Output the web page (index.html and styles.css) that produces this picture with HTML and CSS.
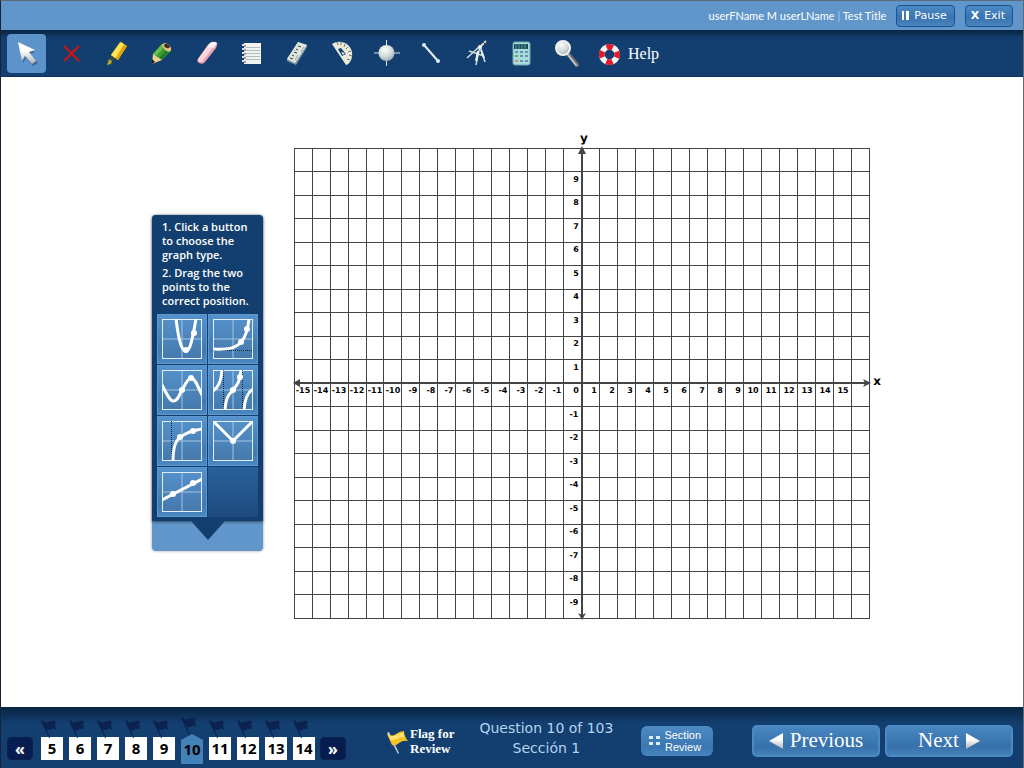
FILE: index.html
```html
<!DOCTYPE html>
<html lang="en">
<head>
<meta charset="utf-8">
<title>Test Title</title>
<link rel="stylesheet" href="styles.css">
</head>
<body>
<div class="app">
  <header class="topbar">
    <span class="user">userFName M userLName <i class="divider">|</i> Test Title</span>
    <button class="small-btn" type="button"><svg width="8" height="9" viewBox="0 0 8 9"><path d="M0 0h2v9H0zM4 0h3v9H4z" fill="#fff"/></svg>Pause</button>
    <button class="small-btn" type="button"><b>X</b>Exit</button>
  </header>

  <nav class="toolbar" aria-label="Tools">
    <button class="tool active" type="button" aria-label="Pointer"><svg viewBox="0 0 32 32"><path d="M8 7l16 8-5 2 8 9-5 3-7-8-3 5z" fill="#2f4f76" opacity=".6"/><path d="M7 5l17 8-6 2 7 9-4 3-7-8-3 5z" fill="url(#silver)"/></svg></button>
    <button class="tool" type="button" aria-label="Delete"><svg viewBox="0 0 32 32"><path d="M8 9l15 15M23 9L8 24" stroke="#c81414" stroke-width="2.400" fill="none"/></svg></button>
    <button class="tool" type="button" aria-label="Highlighter"><svg viewBox="0 0 32 32"><path d="M19 5l7 4-9 14-7-5z" fill="#f6c514"/><path d="M20 5l3 2-9 14-4-3z" fill="#ffe25c"/><path d="M23 7l3 2-9 14-2-1z" fill="#e0a70c"/><path d="M10 19l5 3-4 2-2-2z" fill="#3b4a3f"/><path d="M8 22l3 2-1 3-4 1z" fill="#b7a52a"/></svg></button>
    <button class="tool" type="button" aria-label="Pencil"><svg viewBox="0 0 32 32"><path d="M16 7l9 7-9 9-9-6z" fill="#3a9b34"/><path d="M16 7l3 2-9 10-3-2z" fill="#66bd50"/><path d="M23 10l2 3-9 10-3-2z" fill="#257d29"/><path d="M7 17l9 6-10 4z" fill="#ecd38d"/><path d="M6 22l3 3-3 2z" fill="#15191d"/><path d="M16 8c2-4 10 0 9 5-2 4-7 0-9-5z" fill="#e8c082"/><ellipse cx="21" cy="9" rx="3" ry="2" fill="#422c25" transform="rotate(25 21 9)"/></svg></button>
    <button class="tool" type="button" aria-label="Eraser"><svg viewBox="0 0 32 32"><path d="M17 8q4-5 9-2 1 2-1 5L14 25q-2 3-6 1-3-2-1-4z" fill="#eda1ae"/><path d="M17 8q4-5 9-2l-3 3L11 25q-4 0-4-3z" fill="#ffd7dc"/><path d="M18 7q4-4 8-1l-3 5-6-1z" fill="#fff" opacity=".7"/></svg></button>
    <button class="tool" type="button" aria-label="Notepad"><svg viewBox="0 0 32 32"><path d="M8 6h17v21H8z" fill="#f1f3f2"/><path d="M10 10.500h14M10 13.500h14M10 16.500h14M10 19.500h14M10 22.500h14" stroke="#b2bcbc"/><path d="M6 8h4M6 12h4M6 16h4M6 20h4M6 24h4" stroke="#dfe4e6" stroke-width="2"/><path d="M8 9h2M8 13h2M8 17h2M8 21h2M8 25h2" stroke="#9a3347"/></svg></button>
    <button class="tool" type="button" aria-label="Ruler"><svg viewBox="0 0 32 32"><path d="M17 5l9 3v2L15 28l-9-4v-2z" fill="#8497a0"/><path d="M17 5l9 3-12 18-8-4z" fill="#dfe4dd"/><path d="M17 9l3 1M15 12l2 1M13 15l3 1M11 18l2 1M9 21l3 1" stroke="#39434a"/><path d="M23 10l-3 5M17 18l-3 5" stroke="#9aa5a4"/></svg></button>
    <button class="tool" type="button" aria-label="Protractor"><svg viewBox="0 0 32 32"><path d="M6 7C14 2 24 6 26 15 27 21 24 27 20 28z" fill="#ebebdc"/><path d="M12 12l3-1 5 6-4 2z" fill="#123f70"/><path d="M15 15l4 1-2 2z" fill="#f1efd8"/><path d="M11 5l1 3M15 5l0 3M19 7l-1 3M22 10l-2 2M25 14l-3 1M26 19l-3-1M24 23l-3-1" stroke="#6b7775"/></svg></button>
    <button class="tool" type="button" aria-label="Point"><svg viewBox="0 0 32 32"><path d="M15.500 3v26M3 16h26" stroke="#d8e2e8"/><circle cx="15.500" cy="16" r="8" fill="url(#orb)"/></svg></button>
    <button class="tool" type="button" aria-label="Line segment"><svg viewBox="0 0 32 32"><path d="M8 8l14 16" stroke="#dfeaf0" stroke-width="2"/><circle cx="8" cy="8" r="2" fill="#d9f0fa"/><circle cx="22" cy="24" r="2" fill="#d9f0fa"/></svg></button>
    <button class="tool" type="button" aria-label="Compass"><svg viewBox="0 0 32 32"><path d="M19 9L6 21M19 9l-4 19M19 9l5 16M8 14l15 5" stroke="#d2dce0" stroke-width="1.500" fill="none"/><path d="M17 14l-2 10M20 13l3 8" stroke="#eef2f2" stroke-width="2"/><path d="M19 10l6-6" stroke="#e3dfc4" stroke-width="2"/><circle cx="19" cy="10" r="2" fill="#f4f6f6"/><path d="M24 8l2-4M22 5l2 2" stroke="#4b5153"/></svg></button>
    <button class="tool" type="button" aria-label="Calculator"><svg viewBox="0 0 32 32"><rect x="7" y="5" width="17" height="23" rx="2" fill="#a9dcdd" stroke="#6da9b0"/><path d="M8 7h14v5H8z" fill="#194c57"/><path d="M10 7v5M13 7v5M16 7v5M19 7v5" stroke="#5f9ca0"/><path d="M9 15h3M14 15h3M19 15h3M14 19h3M19 19h3M14 24h3M19 24h3" stroke="#6994ad" stroke-width="2"/><path d="M9 19h3" stroke="#6cae5f" stroke-width="2"/><path d="M9 24h3" stroke="#df8c72" stroke-width="2"/></svg></button>
    <button class="tool" type="button" aria-label="Magnifier"><svg viewBox="0 0 32 32"><path d="M18 18l8 10" stroke="#6f7375" stroke-width="4" stroke-linecap="round"/><path d="M17 18l8 10" stroke="#c3c4c2" stroke-width="2" stroke-linecap="round"/><circle cx="12" cy="11" r="7" fill="url(#orb)" stroke="#f2f3ee" stroke-width="2"/></svg></button>
    <button class="help" type="button"><svg viewBox="0 0 24 24"><circle cx="12" cy="12" r="8" fill="none" stroke="#f6f6f6" stroke-width="6"/><circle cx="12" cy="12" r="8" fill="none" stroke="#de1c2c" stroke-width="6" stroke-dasharray="6.6 5.966" stroke-dashoffset="3.3"/></svg>Help</button>
  </nav>

  <main class="stage">
    <section class="panel" aria-label="Graph type">
      <div class="panel-body">
        <p>1. Click a button<br>to choose the<br>graph type.</p>
        <p>2. Drag the two<br>points to the<br>correct position.</p>
        <div class="tiles">
          <button class="tile" type="button" aria-label="Quadratic"><svg viewBox="0 0 40 40"><use href="#frame"/><path class="curve" d="M14 0C17 24 20 32 24 32S30 22 34 0"/><circle cx="24" cy="31" r="3"/><circle cx="32" cy="14" r="3"/></svg></button>
          <button class="tile" type="button" aria-label="Exponential"><svg viewBox="0 0 40 40"><use href="#frame"/><path class="dots" d="M0 31.500H40"/><path class="curve" d="M0 30C16 31 23 29 28 23Q34 17 36 0"/><circle cx="28" cy="23" r="3"/><circle cx="34" cy="10" r="3"/></svg></button>
          <button class="tile" type="button" aria-label="Sine"><svg viewBox="0 0 40 40"><use href="#frame"/><path class="curve" d="M0 15C5 25 8 31 11 31 16 31 17 25 20 20S26 8 29 8 34 12 40 25"/><circle cx="20" cy="20" r="3"/><circle cx="29" cy="8" r="3"/></svg></button>
          <button class="tile" type="button" aria-label="Tangent"><svg viewBox="0 0 40 40"><use href="#frame"/><path class="dots" d="M10.500 0V40M29.500 0V40"/><path class="curve" d="M0 21Q8 16 9 0M12 40C13 25 17 24 20 20S27 13 28 0M31 40Q32 24 40 19"/><circle cx="20" cy="20" r="3"/><circle cx="27" cy="7" r="3"/></svg></button>
          <button class="tile" type="button" aria-label="Logarithmic"><svg viewBox="0 0 40 40"><use href="#frame"/><path class="dots" d="M9.500 0V40"/><path class="curve" d="M11 40C11 24 15 18 19 16Q26 10 40 8"/><circle cx="18" cy="16" r="3"/><circle cx="31" cy="10" r="3"/></svg></button>
          <button class="tile" type="button" aria-label="Absolute value"><svg viewBox="0 0 40 40"><use href="#frame"/><path class="curve" d="M0 0L20 20 40 0"/><circle cx="20" cy="20" r="3"/></svg></button>
          <button class="tile" type="button" aria-label="Linear"><svg viewBox="0 0 40 40"><use href="#frame"/><path class="curve" d="M0 28L40 7"/><circle cx="11" cy="22" r="3"/><circle cx="31" cy="11" r="3"/></svg></button>
          <div class="tile-empty"></div>
        </div>
      </div>
      <div class="panel-foot"><svg width="34" height="19" viewBox="0 0 34 19"><path d="M0 0h34L17 19z" fill="#133f70"/></svg></div>
    </section>
    <svg class="chart" viewBox="0 0 604 506" role="img" aria-label="Coordinate plane">
      <g id="grid"></g>
      <path class="axis" d="M12 253H583M298 21V486"/>
      <path class="tip" d="M9 253l7-4v3h2v2h-2v3zM587 253l-8-4 2 4-2 4zM298 16l4 8h-8zM298 490l4-7-4 2-4-2z"/>
      <g id="labels"></g>
      <text class="axis-name" x="300" y="12">y</text>
      <text class="axis-name" x="593" y="255">x</text>
    </svg>
  </main>

  <footer class="bottom">
    <nav class="pager" id="pager" aria-label="Questions"></nav>
    <button class="flag-review" type="button"><svg width="24" height="26" viewBox="0 0 24 26"><path d="M1 5l2-1 10 21-1 1z" fill="#c4ccd2"/><path d="M1 6q5 3 9 0 4-3 8-3 0 5 4 10-5-1-9 2-3 3-7 2z" fill="#f5c324"/><path d="M2 7q5 2 9 0 4-2 7-2l0 4q-5 0-8 2-3 2-5 1z" fill="#ffe271"/></svg><span>Flag for<br>Review</span></button>
    <p class="status">Question 10 of 103<br>Sección 1</p>
    <button class="section-review" type="button"><svg width="12" height="9" viewBox="0 0 12 9"><path d="M0 0h4v3H0zM7 0h4v3H7zM0 6h4v3H0zM7 6h4v3H7z" fill="#dcecf8"/></svg><span>Section<br>Review</span></button>
    <div class="step-group">
      <button class="step" type="button"><svg width="14" height="16" viewBox="0 0 14 16"><path d="M0 8L14 0v16z" fill="url(#silver)"/></svg>Previous</button>
      <button class="step" type="button">Next<svg width="14" height="16" viewBox="0 0 14 16"><path d="M14 8L0 0v16z" fill="url(#silver)"/></svg></button>
    </div>
  </footer>
</div>

<svg class="defs" width="0" height="0" aria-hidden="true">
  <defs>
    <linearGradient id="silver" x1="0" y1="0" x2="0" y2="1"><stop offset=".4" stop-color="#fff"/><stop offset="1" stop-color="#b0b0b6"/></linearGradient>
    <radialGradient id="orb" cx=".4" cy=".3" r=".7"><stop offset="0" stop-color="#fbfcfa"/><stop offset=".6" stop-color="#d2dbd9"/><stop offset="1" stop-color="#9fadb0"/></radialGradient>
    <g id="frame"><path d="M20 0V40M0 20H40" fill="none" stroke="#a5c4e1"/><rect x="0" y="0" width="40" height="40" fill="none" stroke="#e3eef8" stroke-width="2"/></g>
    <path id="flag" d="M0 1l2-1 1 2q4 1 6-1h6l-1 4 1 4q-4-1-6 1l-3 0 3 8H8z"/>
  </defs>
</svg>
<script src="app.js"></script>
</body>
</html>
```
FILE: app.js
```js
const NS = "http://www.w3.org/2000/svg";

function add(parent, name, attrs, text) {
  const el = document.createElementNS(NS, name);
  for (const key in attrs) el.setAttribute(key, attrs[key]);
  if (text !== undefined) el.textContent = text;
  parent.appendChild(el);
}

// Plane geometry: 32 columns by 20 rows.
const left = 10, top0 = 18, width = 575, height = 470;
const colX = i => Math.floor(left + 0.13 + i * width / 32) + 0.5;
const rowY = i => Math.floor(top0 + i * height / 20) + 0.5;

let d = "";
for (let i = 0; i <= 32; i++) d += `M${colX(i)} ${top0}V${top0 + height + 1}`;
for (let i = 0; i <= 20; i++) d += `M${left} ${rowY(i)}H${left + width + 1}`;
add(document.getElementById("grid"), "path", { d });

const labels = document.getElementById("labels");
for (let n = -15; n <= 15; n++) {
  // Two-digit labels sit a little left of the one-digit ones.
  const shift = Math.abs(n) > 9 ? -3 : n < 0 ? -1 : 0;
  add(labels, "text", { x: 292 + n * 18 + shift, y: 263 }, n);
}
for (let n = -9; n <= 9; n++) {
  if (n !== 0) {
    add(labels, "text", { x: n < 0 ? 290 : 292, y: Math.round(263 - n * 23.5) }, n);
  }
}

// Question pager.
const pager = document.getElementById("pager");
let html = '<button class="jump" type="button" aria-label="Earlier questions">«</button><ol>';
for (let q = 5; q <= 14; q++) {
  html += `<li${q === 10 ? ' class="current"' : ""}><svg width="16" height="18" viewBox="0 0 16 18"><use href="#flag"/></svg><a href="#q${q}">${q}</a></li>`;
}
html += '</ol><button class="jump" type="button" aria-label="Later questions">»</button>';
pager.innerHTML = html;
```
FILE: styles.css
```css
* { box-sizing: border-box; }
body { margin: 0; background: #fff; font-family: "DejaVu Sans", sans-serif; }
p, ol { margin: 0; padding: 0; }
button { font: inherit; color: inherit; border: 0; background: none; padding: 0; cursor: pointer; }
svg { display: block; flex: none; }
.defs { position: absolute; }

.app { min-height: 100vh; display: flex; flex-direction: column; border: solid #5c6b78; border-width: 1px 1px 0; border-left-color: #14243a; }

.topbar { height: 29px; display: flex; align-items: center; justify-content: flex-end; gap: 10px; padding-right: 10px; background: #6096c9; color: #fff; }
.user { font: 11px Lato, sans-serif; }
.divider { font-style: normal; opacity: .5; }
.small-btn { height: 22px; display: flex; align-items: center; gap: 4px; padding: 0 7px 0 5px; border: 1px solid #195292; border-radius: 4px; background: linear-gradient(#4b8ac6, #3974b0 60%, #4985bf); font-size: 11px; color: #fff; }
.small-btn b { margin-right: 1px; }

.toolbar { height: 47px; display: flex; align-items: center; gap: 6px; padding: 0 6px; background: linear-gradient(#08233f, #133f70 8px); color: #fff; border-bottom: 1px solid #0c3260; }
.tool { width: 39px; height: 39px; display: grid; place-items: center; border-radius: 4px; }
.tool svg { width: 32px; height: 32px; }
.active { background: #5b93ca; }
.help { display: flex; align-items: center; gap: 7px; margin: 2px 0 0 6px; font: 16px "Liberation Serif", serif; }
.help svg { width: 23px; height: 23px; }

.stage { flex: 1; display: flex; align-items: center; justify-content: center; gap: 21px; padding: 0 0 18px 16px; }

.panel { width: 111px; border-radius: 4px; box-shadow: 0 0 3px rgba(0, 0, 0, .4); background: #6096c9; }
.panel-body { padding: 5px 5px 4px; border-radius: 4px 4px 0 0; background: #133f70; color: #fff; box-shadow: 0 1px 3px rgba(0, 0, 0, .5); }
.panel-body p { padding-left: 5px; margin-bottom: 4px; font: 600 11px/14px "Open Sans", sans-serif; white-space: nowrap; }
.tiles { display: grid; grid-template-columns: 1fr 1fr; grid-auto-rows: 50px; gap: 1px; margin-top: 6px; }
.tile { display: grid; place-items: center; border: 1px solid #5e98cf; background: linear-gradient(#5592cb, #3f7ab3 75%, #4a88c2); }
.tile svg { width: 40px; height: 40px; background: linear-gradient(#5490c9, #4579ad); }
.tile circle { fill: #fff; }
.curve { fill: none; stroke: #fff; stroke-width: 3px; }
.dots { fill: none; stroke: #10263e; stroke-dasharray: 1 1; }
.tile-empty { background: linear-gradient(#2a6199, #1d4b7f); }
.panel-foot { height: 30px; display: flex; justify-content: center; }

.chart { width: 604px; height: 506px; overflow: visible; }
#grid path { stroke: #444; shape-rendering: crispEdges; }
.axis { stroke: #444; stroke-width: 2px; }
.tip { fill: #444; }
#labels text { font: bold 8px "DejaVu Sans", sans-serif; text-anchor: middle; text-rendering: geometricPrecision; }
.axis-name { font: bold 12px "DejaVu Sans", sans-serif; text-anchor: middle; text-rendering: geometricPrecision; }

.bottom { height: 61px; display: flex; align-items: center; padding: 6px 10px 0 6px; background: linear-gradient(#08233f, #133f70 16px); color: #fff; }
.pager { display: flex; align-items: center; align-self: flex-end; padding-bottom: 8px; }
.pager ol { display: flex; gap: 6px; height: 23px; margin: 0 5px 0 8px; list-style: none; }
.pager li { position: relative; width: 22px; }
.pager li svg { position: absolute; left: 0; top: -17px; fill: #0c2350; }
.pager a { display: block; height: 23px; background: #fff; color: #000; font: bold 15px/23px "Noto Sans", sans-serif; text-align: center; text-decoration: none; }
.pager .current svg { top: -20px; }
.pager .current a { height: 30px; margin-top: -3px; padding-top: 4px; background: #4381bb; clip-path: polygon(50% 0, 100% 6px, 100% 100%, 0 100%, 0 6px); }
.jump { width: 26px; height: 23px; border: 1px solid #0a2348; border-radius: 4px; background: #071c50; font: bold 16px/16px "Noto Sans", sans-serif; }
.flag-review { display: flex; align-items: center; margin-left: 40px; font: bold 13px/15px "Liberation Serif", serif; text-align: left; }
.status { margin-left: 25px; font-size: 14px; line-height: 20px; text-align: center; white-space: nowrap; color: #b5d4ee; margin-bottom: 6px; }
.section-review { display: flex; align-items: center; gap: 3px; height: 30px; margin-left: 28px; padding: 0 12px 0 8px; border-radius: 6px; background: linear-gradient(#4e8bc4, #3a76b1 70%, #4985be); font: 11px/12px "Liberation Sans", sans-serif; text-align: right; }
.step-group { display: flex; gap: 5px; margin-left: auto; }
.step { width: 128px; height: 32px; display: flex; align-items: center; justify-content: center; gap: 7px; border: 2px solid #4c8ac4; border-radius: 5px; background: linear-gradient(#4886c1, #3671ab 70%, #4480b9); font: 21px "Liberation Serif", serif; }
```
